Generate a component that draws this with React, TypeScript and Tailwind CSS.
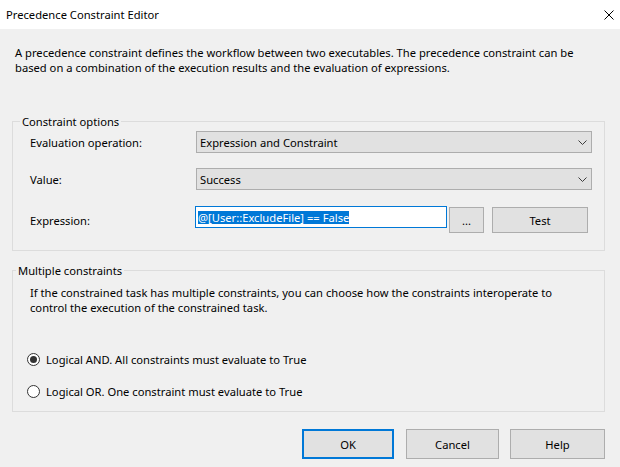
import React from 'react';

const Chevron: React.FC = () => (
  <svg width="9" height="5" viewBox="0 0 9 5" className="shrink-0">
    <polyline points="0.5,0.5 4.5,4.5 8.5,0.5" fill="none" stroke="#3c3c3c" strokeWidth="1" />
  </svg>
);

const Combo: React.FC<{ value: string }> = ({ value }) => (
  <div className="flex-1 h-[22px] flex items-center justify-between border border-[#adadad] bg-[#e1e1e1] pl-[3px] pr-[4px]">
    <span>{value}</span>
    <Chevron />
  </div>
);

const Radio: React.FC<{ checked?: boolean; label: string }> = ({ checked, label }) => (
  <div className="flex items-center pl-[14px]">
    <div className="w-[13px] h-[13px] rounded-full border border-[#333333] bg-white flex items-center justify-center">
      {checked && <div className="w-[7px] h-[7px] rounded-full bg-[#333333]" />}
    </div>
    <span className="ml-[6px]">{label}</span>
  </div>
);

const App: React.FC = () => {
  return (
    <div className="w-[620px] h-[467px] flex flex-col bg-[#f0f0f0] text-black text-[11.2px] leading-[15px] font-['Noto_Sans',sans-serif]">
      <div className="h-[29px] shrink-0 bg-white flex items-center justify-between pl-[6px] pr-[6px]">
        <span>Precedence Constraint Editor</span>
        <svg width="10" height="10" viewBox="0 0 10 10">
          <line x1="0.5" y1="0.5" x2="9.5" y2="9.5" stroke="#000" strokeWidth="1" />
          <line x1="9.5" y1="0.5" x2="0.5" y2="9.5" stroke="#000" strokeWidth="1" />
        </svg>
      </div>

      <div className="flex flex-col pl-[12px] pr-[15px] pt-[16px]">
        <p className="pl-[3px] whitespace-nowrap">
          A precedence constraint defines the workflow between two executables. The precedence constraint can be
          <br />
          based on a combination of the execution results and the evaluation of expressions.
        </p>

        <fieldset className="mt-[39px] border border-[#dcdcdc] pb-[17px]">
          <legend className="ml-[7px] px-[2px]">Constraint options</legend>
          <div className="flex flex-col pl-[17px] pr-[12px]">
            <div className="mt-[2px] flex items-center">
              <span className="w-[166px]">Evaluation operation:</span>
              <Combo value="Expression and Constraint" />
            </div>
            <div className="mt-[15px] flex items-center">
              <span className="w-[166px]">Value:</span>
              <Combo value="Success" />
            </div>
            <div className="mt-[16px] flex items-start">
              <span className="w-[165px] pt-[7px]">Expression:</span>
              <div className="w-[252px] h-[22px] flex items-center border border-[#0078d7] bg-white pl-[2px]">
                <span className="bg-[#0078d7] text-white leading-[13px]">@[User::ExcludeFile] == False</span>
              </div>
              <button className="ml-[2px] mt-[1px] w-[35px] h-[26px] border border-[#adadad] bg-[#e1e1e1] leading-[15px]">
                ...
              </button>
              <button className="ml-[8px] mt-[1px] w-[96px] h-[26px] border border-[#adadad] bg-[#e1e1e1]">
                Test
              </button>
            </div>
          </div>
        </fieldset>

        <fieldset className="mt-[12px] border border-[#dcdcdc] pb-[12px]">
          <legend className="ml-[3px] px-[2px]">Multiple constraints</legend>
          <p className="mt-[7px] pl-[17px] whitespace-nowrap">
            If the constrained task has multiple constraints, you can choose how the constraints interoperate to
            <br />
            control the execution of the constrained task.
          </p>
          <div className="mt-[37px]">
            <Radio checked label="Logical AND. All constraints must evaluate to True" />
          </div>
          <div className="mt-[17px]">
            <Radio label="Logical OR. One constraint must evaluate to True" />
          </div>
        </fieldset>

        <div className="mt-[17px] flex justify-end">
          <button className="w-[92px] h-[30px] border-2 border-[#0078d7] bg-[#e1e1e1]">OK</button>
          <button className="ml-[12px] w-[93px] h-[30px] border border-[#adadad] bg-[#e1e1e1]">Cancel</button>
          <button className="ml-[11px] w-[95px] h-[30px] border border-[#adadad] bg-[#e1e1e1]">Help</button>
        </div>
      </div>
    </div>
  );
};

export default App;
